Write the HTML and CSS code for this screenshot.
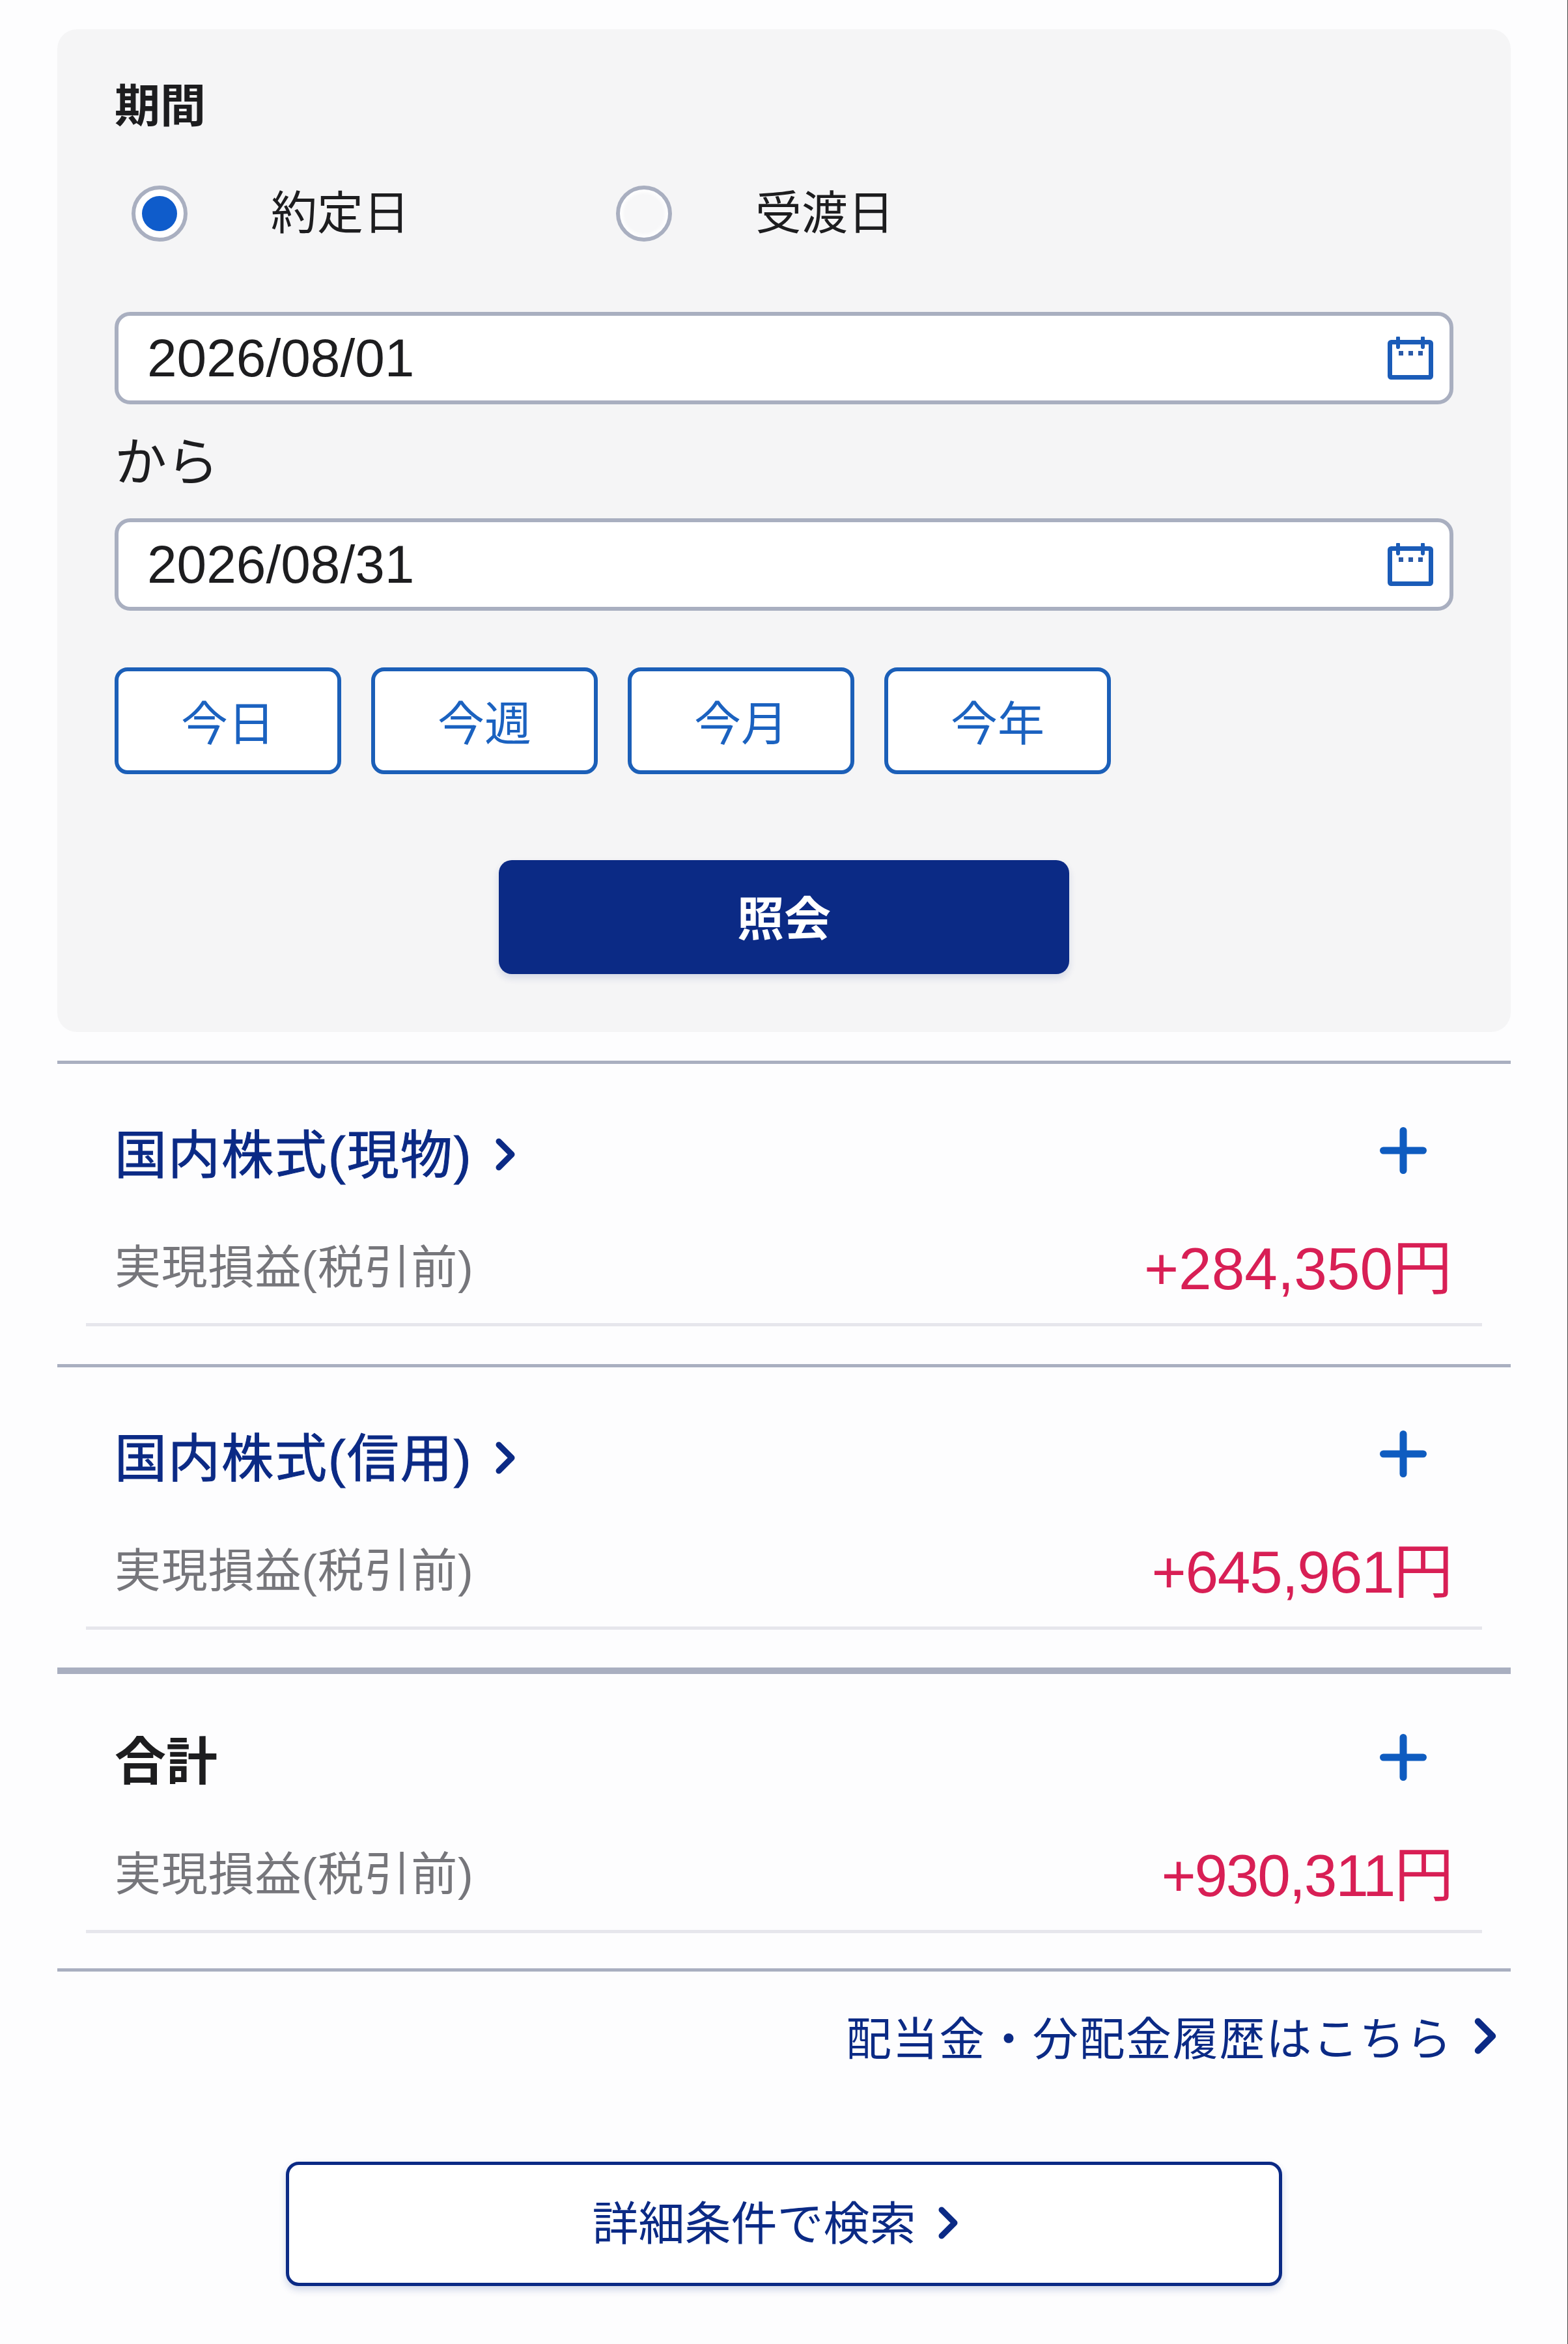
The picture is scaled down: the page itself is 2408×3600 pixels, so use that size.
FILE: index.html
```html
<!DOCTYPE html>
<html lang="ja">
<head>
  <meta charset="UTF-8" />
  <title>実現損益</title>
  <link rel="stylesheet" href="styles.css">
</head>
<body>
  <!-- 検索条件 -->
  <div class="panel">
    <div class="panel-title">期間</div>
    <div class="radios">
      <div class="radio-item">
        <span class="radio radio-on"><span class="radio-dot"></span></span>
        <span class="radio-label">約定日</span>
      </div>
      <div class="radio-item">
        <span class="radio"></span>
        <span class="radio-label">受渡日</span>
      </div>
    </div>
    <div class="date-box">
      <span>2026/08/01</span>
      <svg class="cal" viewBox="0 0 70 66"><rect x="3.500" y="8.500" width="63" height="54" rx="2" fill="none" stroke="#1b5cb8" stroke-width="7"/><path d="M16 2v14M54 2v14" stroke="#1b5cb8" stroke-width="6" stroke-linecap="round"/><path d="M17 22h7v7h-7zM32 22h7v7h-7zM47 22h7v7h-7z" fill="#2a5aa8"/></svg>
    </div>
    <div class="date-sep">から</div>
    <div class="date-box">
      <span>2026/08/31</span>
      <svg class="cal" viewBox="0 0 70 66"><rect x="3.500" y="8.500" width="63" height="54" rx="2" fill="none" stroke="#1b5cb8" stroke-width="7"/><path d="M16 2v14M54 2v14" stroke="#1b5cb8" stroke-width="6" stroke-linecap="round"/><path d="M17 22h7v7h-7zM32 22h7v7h-7zM47 22h7v7h-7z" fill="#2a5aa8"/></svg>
    </div>
    <div class="quick-btns">
      <button class="quick">今日</button>
      <button class="quick">今週</button>
      <button class="quick">今月</button>
      <button class="quick">今年</button>
    </div>
    <button class="submit">照会</button>
  </div>

  <!-- 損益 -->
  <div class="section">
    <div class="section-head">
      <a class="section-title">国内株式(現物)<svg class="chev chev-title" viewBox="0 0 30 50"><path d="M5 5l20 20L5 45" /></svg></a>
      <svg class="plus" viewBox="0 0 72 72"><path d="M36 5.500v61M5.500 36h61"/></svg>
    </div>
    <div class="pl-row">
      <span class="pl-label">実現損益(税引前)</span>
      <span class="pl-value">+284,350円</span>
    </div>
  </div>
  <div class="section">
    <div class="section-head">
      <a class="section-title">国内株式(信用)<svg class="chev chev-title" viewBox="0 0 30 50"><path d="M5 5l20 20L5 45" /></svg></a>
      <svg class="plus" viewBox="0 0 72 72"><path d="M36 5.500v61M5.500 36h61"/></svg>
    </div>
    <div class="pl-row">
      <span class="pl-label">実現損益(税引前)</span>
      <span class="pl-value pl-value-one">+645,961円</span>
    </div>
  </div>
  <div class="section section-total">
    <div class="section-head">
      <span class="total-title">合計</span>
      <svg class="plus" viewBox="0 0 72 72"><path d="M36 5.500v61M5.500 36h61"/></svg>
    </div>
    <div class="pl-row">
      <span class="pl-label">実現損益(税引前)</span>
      <span class="pl-value pl-value-two">+930,311円</span>
    </div>
  </div>

  <div class="history">
    <a class="history-link">配当金・分配金履歴はこちら<svg class="chev chev-link" viewBox="0 0 30 50"><path d="M5 5l20 20L5 45" /></svg></a>
  </div>

  <button class="detail-btn">詳細条件で検索<svg class="chev chev-btn" viewBox="0 0 30 50"><path d="M5 5l20 20L5 45" /></svg></button>
</body>
</html>
```

FILE: styles.css
```css
html, body {
  margin: 0;
  padding: 0;
  background: #fdfdfe;
  font-family: "Liberation Sans", "Noto Sans CJK JP", sans-serif;
  color: #1d1d1f;
}

body {
  width: 2408px;
  height: 3600px;
  box-sizing: border-box;
  padding: 45px 87px 0 88px;
  border-right: 1px solid #444;
  overflow: hidden;
}

.panel {
  background: #f5f5f6;
  border-radius: 30px;
  height: 1540px;
  box-sizing: border-box;
  padding: 79px 88px 0;
}

.panel-title {
  font-size: 70px;
  line-height: 80px;
  font-weight: 700;
}

.radios {
  display: flex;
  margin-top: 81px;
  height: 86px;
  margin-left: 26px;
}

.radio-item {
  display: flex;
  align-items: center;
  width: 744px;
}

.radio {
  width: 86px;
  height: 86px;
  box-sizing: border-box;
  border: 6px solid #a9afc0;
  border-radius: 50%;
  background: radial-gradient(circle, #f7f7f8 55%, #fff 70%);
  display: flex;
  align-items: center;
  justify-content: center;
}

.radio-on {
  background: #fff;
}

.radio-dot {
  width: 54px;
  height: 54px;
  border-radius: 50%;
  background: #0f5ccb;
}

.radio-label {
  margin: 0 0 14px 128px;
  font-size: 71px;
}

.date-box {
  height: 142px;
  box-sizing: border-box;
  border: 6px solid #a9afc0;
  border-radius: 24px;
  background: #fff;
  display: flex;
  align-items: center;
  justify-content: space-between;
  padding: 0 25px 0 44px;
  font-size: 82px;
  margin-top: 108px;
}

.cal {
  width: 70px;
  height: 66px;
}

.date-sep {
  font-size: 80px;
  line-height: 180px;
  height: 175px;
}

.date-sep + .date-box {
  margin-top: 0;
}

.quick-btns {
  display: flex;
  gap: 46px;
  margin-top: 87px;
}

button {
  font-family: inherit;
  padding: 0;
  cursor: pointer;
}

.quick {
  width: 348px;
  height: 164px;
  box-sizing: border-box;
  background: #fff;
  border: 6px solid #1b5fb8;
  border-radius: 20px;
  color: #1b62c0;
  font-size: 72px;
  padding-bottom: 4px;
}

.submit {
  display: block;
  width: 876px;
  height: 175px;
  margin: 132px auto 0;
  border: none;
  border-radius: 20px;
  background: #0b2a85;
  color: #fff;
  font-size: 72px;
  font-weight: 700;
  padding-bottom: 6px;
  box-shadow: 0 6px 12px rgba(11, 42, 133, 0.14);
}

.section {
  border-top: 5px solid #a9afc0;
  height: 466px;
  box-sizing: border-box;
  padding: 0 44px 0 88px;
}

.panel + .section {
  margin-top: 44px;
}

.section-total {
  border-top-width: 10px;
  height: 462px;
}

.section-head {
  display: flex;
  align-items: center;
  justify-content: space-between;
  height: 142px;
  padding: 0 85px 0 0;
  margin-top: 62px;
}

.section-total .section-head {
  margin-top: 57px;
}

.section-title {
  display: flex;
  align-items: center;
  font-size: 80px;
  letter-spacing: 2px;
  color: #0b2a85;
  -webkit-text-stroke: 1px #0b2a85;
}

.total-title {
  font-size: 79px;
  font-weight: 700;
}

.plus {
  width: 72px;
  height: 72px;
}

.plus path {
  fill: none;
  stroke: #0f5cc0;
  stroke-width: 11;
  stroke-linecap: round;
}

.chev path {
  fill: none;
  stroke: #0b2a85;
  stroke-width: 9;
  stroke-linecap: round;
  stroke-linejoin: round;
}

.chev-title {
  width: 30px;
  height: 50px;
  margin: 12px 0 0 36px;
}

.pl-row {
  display: flex;
  align-items: center;
  justify-content: space-between;
  margin: 0 0 0 -44px;
  padding: 10px 46px 0 44px;
  height: 184px;
  border-bottom: 5px solid #e6e6ec;
}

.pl-label {
  font-size: 71px;
  letter-spacing: 0.8px;
  color: #76767b;
}

.pl-value {
  font-size: 91px;
  color: #d81f55;
}

/* 1の字幅が狭い分を詰める */
.pl-value-one {
  letter-spacing: -1.300px;
}

.pl-value-two {
  letter-spacing: -2.200px;
}

.history {
  border-top: 5px solid #a9afc0;
  display: flex;
  justify-content: flex-end;
  padding: 48px 22px 0 0;
}

.history-link {
  display: flex;
  align-items: center;
  font-size: 70px;
  letter-spacing: 1.700px;
  color: #0b2a85;
}

.chev-link {
  width: 34px;
  height: 56px;
  margin-left: 33px;
}

.detail-btn {
  display: flex;
  align-items: center;
  justify-content: center;
  width: 1530px;
  height: 191px;
  margin: 143px auto 0;
  box-sizing: border-box;
  border: 5px solid #0b2a85;
  border-radius: 20px;
  background: #fff;
  color: #0b2a85;
  font-size: 71px;
  padding: 0 28px 14px 0;
  box-shadow: 0 6px 12px rgba(11, 42, 133, 0.18);
}

.chev-btn {
  width: 30px;
  height: 54px;
  margin: 10px 0 0 34px;
}
```
